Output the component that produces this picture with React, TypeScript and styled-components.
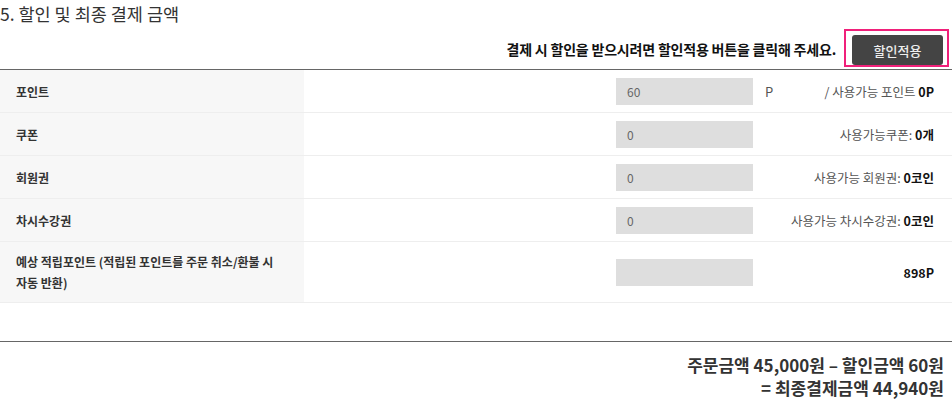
import React from "react";
import styled, { createGlobalStyle } from "styled-components";

const Global = createGlobalStyle`
  html, body { margin: 0; padding: 0; background: #fff; }
  body { font-family: "Noto Sans CJK KR", "Noto Sans", sans-serif; color: #333; }
`;

const Page = styled.div`
  width: 952px;
`;

const Title = styled.h2`
  margin: -1px 0 0;
  height: 30px;
  font-size: 17.5px;
  line-height: 30px;
  font-weight: 400;
  color: #333;
`;

const NoticeBar = styled.div`
  height: 40px;
  display: flex;
  justify-content: flex-end;
  align-items: flex-start;
  padding-right: 3px;
`;

const NoticeText = styled.p`
  margin: 0 8px 0 0;
  height: 40px;
  line-height: 40px;
  font-size: 14px;
  letter-spacing: -0.2px;
  font-weight: 700;
  color: #111;
`;

const Highlight = styled.div`
  border: 2px solid #f0207a;
  padding: 4px 4px 0 6px;
  box-sizing: border-box;
  height: 38px;
`;

const ApplyButton = styled.button`
  width: 91px;
  height: 30px;
  border: 0;
  border-radius: 3px;
  background: #444;
  color: #eee;
  font-family: inherit;
  font-size: 13px;
  font-weight: 500;
  cursor: pointer;
  padding: 0;
`;

const Table = styled.div`
  border-top: 1px solid #666;
`;

const Row = styled.div<{ $tall?: boolean }>`
  display: grid;
  grid-template-columns: 304px 312px 137px 1fr;
  align-items: center;
  height: ${(p) => (p.$tall ? "60px" : "42px")};
  border-bottom: 1px solid #eee;
`;

const Label = styled.div`
  align-self: stretch;
  background: #f7f7f7;
  display: flex;
  align-items: center;
  padding: 0 28px 0 16px;
  font-size: 12px;
  font-weight: 700;
  line-height: 21px;
  color: #333;
`;

const Spacer = styled.div``;

const Field = styled.div`
  height: 27px;
  background: #dedede;
  font-size: 12px;
  line-height: 27px;
  color: #666;
  padding-left: 11px;
  box-sizing: border-box;
`;

const InfoCell = styled.div`
  display: flex;
  align-items: center;
  justify-content: space-between;
  padding: 0 18px 0 12px;
  font-size: 12.5px;
  color: #555;
`;

const Unit = styled.span`
  font-size: 13px;
  color: #555;
`;

const Info = styled.span`
  margin-left: auto;
`;

const Strong = styled.b`
  color: #111;
  font-weight: 700;
`;

const Divider = styled.div`
  margin-top: 38px;
  border-top: 1px solid #666;
`;

const Totals = styled.div`
  padding: 11px 8px 0 0;
  text-align: right;
  font-size: 17px;
  font-weight: 700;
  line-height: 23px;
  color: #333;
`;

const rows = [
  { label: "포인트", value: "60", unit: "P", info: "/ 사용가능 포인트 ", strong: "0P" },
  { label: "쿠폰", value: "0", info: "사용가능쿠폰: ", strong: "0개" },
  { label: "회원권", value: "0", info: "사용가능 회원권: ", strong: "0코인" },
  { label: "차시수강권", value: "0", info: "사용가능 차시수강권: ", strong: "0코인" },
];

export default function App() {
  return (
    <Page>
      <Global />
      <Title>5. 할인 및 최종 결제 금액</Title>
      <NoticeBar>
        <NoticeText>결제 시 할인을 받으시려면 할인적용 버튼을 클릭해 주세요.</NoticeText>
        <Highlight>
          <ApplyButton>할인적용</ApplyButton>
        </Highlight>
      </NoticeBar>
      <Table>
        {rows.map((r) => (
          <Row key={r.label}>
            <Label>{r.label}</Label>
            <Spacer />
            <Field>{r.value}</Field>
            <InfoCell>
              {r.unit && <Unit>{r.unit}</Unit>}
              <Info>
                {r.info}
                <Strong>{r.strong}</Strong>
              </Info>
            </InfoCell>
          </Row>
        ))}
        <Row $tall>
          <Label>예상 적립포인트 (적립된 포인트를 주문 취소/환불 시 자동 반환)</Label>
          <Spacer />
          <Field />
          <InfoCell>
            <Info>
              <Strong>898P</Strong>
            </Info>
          </InfoCell>
        </Row>
      </Table>
      <Divider />
      <Totals>
        주문금액 45,000원 – 할인금액 60원
        <br />= 최종결제금액 44,940원
      </Totals>
    </Page>
  );
}
